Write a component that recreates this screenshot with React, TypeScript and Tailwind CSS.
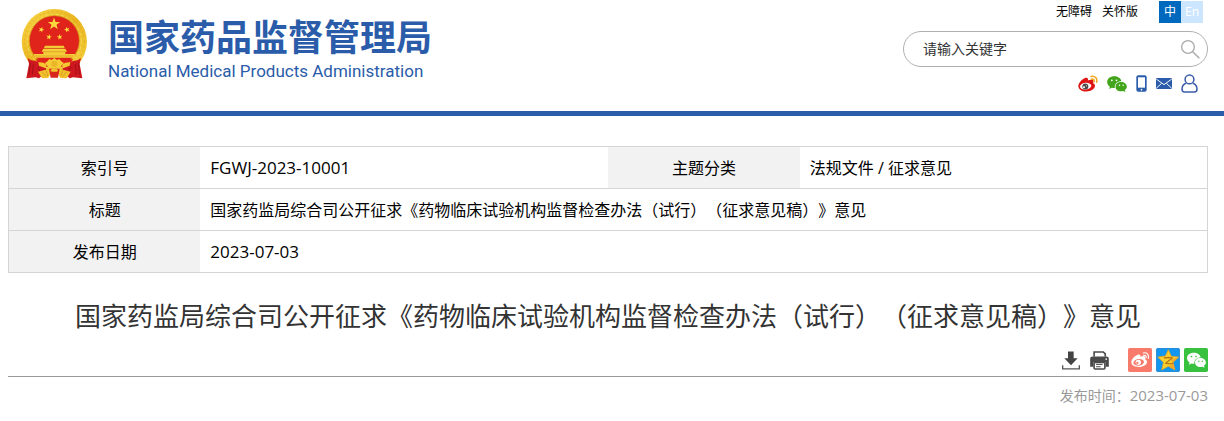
import React from "react";

const STAR = "M0 -10 L2.4 -3.2 L9.5 -3.1 L3.8 1.2 L5.9 8.1 L0 4 L-5.9 8.1 L-3.8 1.2 L-9.5 -3.1 L-2.4 -3.2Z";

function Emblem() {
  return (
    <svg viewBox="32 24 204 216" className="h-[72px] w-[68px] shrink-0" aria-hidden="true">
      <defs>
        <linearGradient id="gold" x1="0" y1="0" x2="1" y2="1">
          <stop offset="0" stopColor="#f8d548" />
          <stop offset="0.5" stopColor="#e9b51f" />
          <stop offset="1" stopColor="#f6d343" />
        </linearGradient>
      </defs>
      <circle cx="132" cy="125" r="98" fill="url(#gold)" />
      <circle cx="132" cy="125" r="90" fill="none" stroke="#dba41c" strokeWidth="2" strokeDasharray="5 8" />
      <circle cx="132" cy="124" r="81" fill="none" stroke="#f6d85a" strokeWidth="3" strokeDasharray="9 7" />
      <circle cx="132" cy="122" r="75" fill="#e0231b" stroke="#d39a18" strokeWidth="2" />
      <path d={STAR} transform="translate(131 72) scale(1.95)" fill="#fbd83c" />
      <path d={STAR} transform="translate(93 89) rotate(20) scale(.92)" fill="#fbd83c" />
      <path d={STAR} transform="translate(170 89) rotate(-20) scale(.92)" fill="#fbd83c" />
      <path d={STAR} transform="translate(116 111) rotate(10) scale(.92)" fill="#fbd83c" />
      <path d={STAR} transform="translate(148 111) rotate(-10) scale(.92)" fill="#fbd83c" />
      <path d="M104 137h56l3 7h-62zM99 146h66l5 9h-76zM99 155h66v7h-66zM70 162h124l-2 11H74z" fill="#f5cd3a" />
      <path d="M103 145h58M99 155h66M74 168h115" stroke="#c98912" strokeWidth="1.5" />
      <path d="M76 178h112l-14 22H90z" fill="#e0231b" />
      <path d="M52 174q11 10 22 8l32 14 2 20-22 19-10-3-28 3 8-43z" fill="#cf1720" />
      <path d="M212 174q-11 10-22 8l-32 14-2 20 22 19 10-3 28 3-8-43z" fill="#cf1720" />
      <path d="M60 188l-4 36M69 192l-3 31M82 201l8 16M204 188l4 36M195 192l3 31M182 201l-8 16" stroke="#9c0e16" strokeWidth="2.5" />
      <path d="M84 187q15-1 25 7l-3 11-20-8zM180 187q-15-1-25 7l3 11 20-8z" fill="#f4c830" />
      <path d="M110 185l7-8 7 3 8-6 8 6 7-3 7 8 7 4-7 7-5 9-8-4-9 5-9-5-8 4-5-9-7-7z" fill="#f6cc36" />
      <circle cx="132" cy="192" r="9" fill="#eab526" />
      <path d="M83 215l34-9 7 10-10 18-19 1zM181 215l-34-9-7 10 10 18 19 1z" fill="#f2c12e" />
      <path d="M95 215l12 15M107 211l5 17M169 215l-12 15M157 211l-5 17" stroke="#c98b16" strokeWidth="2" />
      <path d="M116 206h32l-5 27h-22z" fill="#d8261c" />
      <path d="M120 210q12-8 24 0l-4 5h-16z" fill="#f2c12e" />
    </svg>
  );
}

function WeiboColor() {
  return (
    <svg viewBox="112 225 60 50" className="h-[17px] w-5" aria-hidden="true">
      <path
        d="M132 234c6-3 10-1 10 3 0 2 0 3-1 4 8-3 15-3 17 1 1 3 0 5-1 7 4 1 6 4 6 8 0 9-12 17-26 17-14 0-24-7-24-16 0-9 9-20 19-24z"
        fill="#df1414"
      />
      <ellipse cx="135" cy="258" rx="17" ry="10" transform="rotate(-6 135 258)" fill="#fff" />
      <circle cx="134" cy="259" r="9" fill="#4a4a4a" />
      <circle cx="130" cy="261" r="3" fill="#fff" />
      <circle cx="137" cy="257" r="1.8" fill="#fff" />
      <path d="M151 229c12-3 20 6 17 17M152 237c6-2 10 3 8 8" fill="none" stroke="#f0a51d" strokeWidth="4.5" strokeLinecap="round" />
    </svg>
  );
}

function WechatShape({ body, eye }: { body: string; eye: string }) {
  return (
    <>
      <path d="M21 1C9 1 0 8 0 18c0 6 3 10 8 14l-2 7 8-4c3 1 6 1 9 1-2-12 8-20 20-20C41 7 32 1 21 1z" fill={body} />
      <path d="M42 18c-10 0-17 6-17 14s7 14 17 14c2 0 4 0 6-1l7 3-2-6c4-3 6-6 6-10 0-8-8-14-17-14z" fill={body} />
      <g fill={eye}>
        <circle cx="14" cy="13" r="2.7" />
        <circle cx="28" cy="13" r="2.7" />
        <circle cx="37" cy="28" r="2.2" />
        <circle cx="48" cy="28" r="2.2" />
      </g>
    </>
  );
}

function PhoneIcon() {
  return (
    <svg viewBox="284 224 33 51" className="h-[17px] w-[11px]" aria-hidden="true">
      <rect x="285" y="225" width="31" height="49" rx="6" fill="#2a5cab" />
      <rect x="290" y="231" width="21" height="31" fill="#fff" />
      <circle cx="300.5" cy="268" r="2.5" fill="#fff" />
    </svg>
  );
}

function MailIcon() {
  return (
    <svg viewBox="342 234 49 33" className="h-[11px] w-4" aria-hidden="true">
      <rect x="342" y="234" width="49" height="33" rx="2" fill="#2a5cab" />
      <path d="M343 237l23.5 17L390 237M343 265l16-15M390 265l-16-15" fill="none" stroke="#fff" strokeWidth="3" />
    </svg>
  );
}

function UserIcon() {
  return (
    <svg viewBox="422 221 50 54" className="h-[19px] w-[17px]" aria-hidden="true">
      <g fill="#fff" stroke="#3c5ea8" strokeWidth="4.5">
        <path d="M437 247c-8 3-12 10-12 17 0 6 2 9 7 9h30c5 0 7-3 7-9 0-7-4-14-12-17" />
        <circle cx="447" cy="236" r="13" />
      </g>
    </svg>
  );
}

function SearchIcon() {
  return (
    <svg viewBox="422 120 57 57" className="h-[19px] w-[19px]" aria-hidden="true">
      <circle cx="443" cy="141" r="19" fill="none" stroke="#aaa" strokeWidth="4" />
      <path d="M457 155l20 20" stroke="#aaa" strokeWidth="4.5" />
    </svg>
  );
}

function DownloadIcon() {
  return (
    <svg viewBox="36 32 54 56" className="h-[19px] w-[18px]" aria-hidden="true">
      <path d="M54 33h17v20h12L63 74 43 53h11z" fill="#444" />
      <path d="M38 74v11h50V74" fill="none" stroke="#555" strokeWidth="4" />
    </svg>
  );
}

function PrinterIcon() {
  return (
    <svg viewBox="120 32 57 58" className="h-[19px] w-[19px]" aria-hidden="true">
      <path d="M132 49V35h28l6 6v8" fill="#fff" stroke="#4a4a4a" strokeWidth="5" />
      <path d="M127 49h43q7 0 7 7v24h-10V66h-37v14h-10V56q0-7 7-7z" fill="#4a4a4a" />
      <circle cx="169" cy="57" r="2.5" fill="#fff" />
      <rect x="132" y="67" width="33" height="20" rx="3" fill="#fff" stroke="#4a4a4a" strokeWidth="5" />
      <path d="M138 73h20M138 80h14" stroke="#4a4a4a" strokeWidth="3" />
    </svg>
  );
}

function WeiboShare() {
  return (
    <svg viewBox="0 0 72 72" className="size-6" aria-hidden="true">
      <rect width="72" height="72" rx="5" fill="#f77a6a" />
      <path
        d="M28 21c6-3 10-1 9 5 8-3 15-3 15 4 0 2 0 3-1 4 4 2 6 4 6 8 0 8-11 15-24 15-14 0-23-6-23-14 0-9 9-18 18-22z"
        fill="#fff"
      />
      <ellipse cx="32" cy="43" rx="16" ry="10" transform="rotate(-6 32 43)" fill="#f77a6a" />
      <circle cx="31" cy="43" r="8" fill="#fff" />
      <circle cx="28" cy="45" r="3.5" fill="#f77a6a" />
      <path d="M46 15c11-3 18 6 15 16M47 22c6-1 9 3 7 8" fill="none" stroke="#fff" strokeWidth="3.5" strokeLinecap="round" />
    </svg>
  );
}

function QzoneShare() {
  return (
    <svg viewBox="0 0 72 72" className="size-6" aria-hidden="true">
      <rect x="1" y="1" width="70" height="70" rx="5" fill="#1296f0" stroke="#0872c4" strokeWidth="2" />
      <path d="M37 5l9 20 22 2-17 16 6 23-20-11-20 11 5-23L5 27l23-3z" fill="#fbd02e" stroke="#e89b16" strokeWidth="2" strokeLinejoin="round" />
      <path d="M68 27L51 43l6 23-20-11 13-7-4-12z" fill="#f3a72c" />
      <path d="M24 30q12-3 25 0L29 46q12 2 23 0" fill="none" stroke="#b97813" strokeWidth="4" strokeLinejoin="round" />
    </svg>
  );
}

const meta = "w-[16%] bg-[#f2f2f2] px-2 text-center font-normal";

export default function App() {
  return (
    <div className="min-h-screen bg-white text-base text-black [font-family:'Open_Sans','Noto_Sans_CJK_SC',sans-serif] [text-spacing-trim:space-all]">
      <header className="flex justify-between border-b-[5px] border-[#2a5caa] pr-4 pl-[21px]">
        <a href="#home" className="flex gap-[19px] pt-2 text-[#2a5caa]">
          <Emblem />
          <span className="flex flex-col pt-1">
            <span className="text-4xl leading-[46px] font-bold [font-family:'Noto_Sans_CJK_SC',sans-serif]">国家药品监督管理局</span>
            <span className="text-[17px] leading-[26px] [font-family:Roboto,sans-serif]">National Medical Products Administration</span>
          </span>
        </a>
        <div className="flex w-[305px] flex-col pb-[18px]">
          <nav className="mr-[5px] flex items-center justify-end pt-px text-xs leading-[22px]">
            <a href="#accessible">无障碍</a>
            <a href="#care" className="mr-[21px] ml-2.5">关怀版</a>
            <a href="#zh" className="w-[22px] bg-[#0069bd] text-center text-white">中</a>
            <a href="#en" className="w-[22px] bg-[#cce6ff] text-center text-white">En</a>
          </nav>
          <form className="mt-2 flex h-9 items-center rounded-full border border-[#b0b0b0] pr-[7px] pl-[19px]" onSubmit={(e) => e.preventDefault()}>
            <input
              type="text"
              aria-label="请输入关键字"
              placeholder="请输入关键字"
              className="min-w-0 flex-1 bg-transparent text-sm outline-none placeholder:text-[#333]"
            />
            <button type="submit" aria-label="搜索">
              <SearchIcon />
            </button>
          </form>
          <div className="mt-[7px] mr-2.5 flex h-[19px] items-center justify-end gap-[9px]">
            <a href="#weibo" aria-label="微博"><WeiboColor /></a>
            <a href="#wechat" aria-label="微信">
              <svg viewBox="0 0 59 48" className="h-4 w-5" aria-hidden="true"><WechatShape body="#43a51c" eye="#fff" /></svg>
            </a>
            <a href="#mobile" aria-label="手机版"><PhoneIcon /></a>
            <a href="#mail" aria-label="邮箱"><MailIcon /></a>
            <a href="#user" aria-label="用户"><UserIcon /></a>
          </div>
        </div>
      </header>

      <main className="pt-[30px] pr-4 pl-2">
        <table className="w-full table-fixed border-collapse border border-[#d5d5d5]">
          <tbody>
            <tr className="h-[42px] border-b border-[#d5d5d5]">
              <th scope="row" className={meta}>索引号</th>
              <td className="w-[34%] px-2.5 text-[17px]">FGWJ-2023-10001</td>
              <th scope="row" className={meta}>主题分类</th>
              <td className="w-[34%] px-2.5">法规文件 / 征求意见</td>
            </tr>
            <tr className="h-[42px] border-b border-[#d5d5d5]">
              <th scope="row" className={meta}>标题</th>
              <td colSpan={3} className="px-2.5">国家药监局综合司公开征求《药物临床试验机构监督检查办法（试行）（征求意见稿）》意见</td>
            </tr>
            <tr className="h-[42px]">
              <th scope="row" className={meta}>发布日期</th>
              <td colSpan={3} className="px-2.5 text-[17px]">2023-07-03</td>
            </tr>
          </tbody>
        </table>

        <h1 className="mt-[19px] text-center text-[26px] leading-[48px] text-[#333]">
          国家药监局综合司公开征求《药物临床试验机构监督检查办法（试行）（征求意见稿）》意见
        </h1>
        <div className="mt-2 flex items-center justify-end gap-1 border-b border-[#999] pb-1">
          <button type="button" aria-label="下载" className="mr-1.5"><DownloadIcon /></button>
          <button type="button" aria-label="打印" className="mr-[15px]"><PrinterIcon /></button>
          <a href="#share-weibo" aria-label="分享到微博"><WeiboShare /></a>
          <a href="#share-qzone" aria-label="分享到QQ空间"><QzoneShare /></a>
          <a href="#share-wechat" aria-label="分享到微信">
            <svg viewBox="0 0 72 72" className="size-6" aria-hidden="true">
              <rect width="72" height="72" rx="5" fill="#38c13f" />
              <g transform="translate(9 13) scale(.96)"><WechatShape body="#fff" eye="#38c13f" /></g>
            </svg>
          </a>
        </div>
        <p className="mt-1.5 text-right text-sm leading-6 text-[#999]">
          发布时间：<time dateTime="2023-07-03" className="text-[15px]">2023-07-03</time>
        </p>
      </main>
    </div>
  );
}
